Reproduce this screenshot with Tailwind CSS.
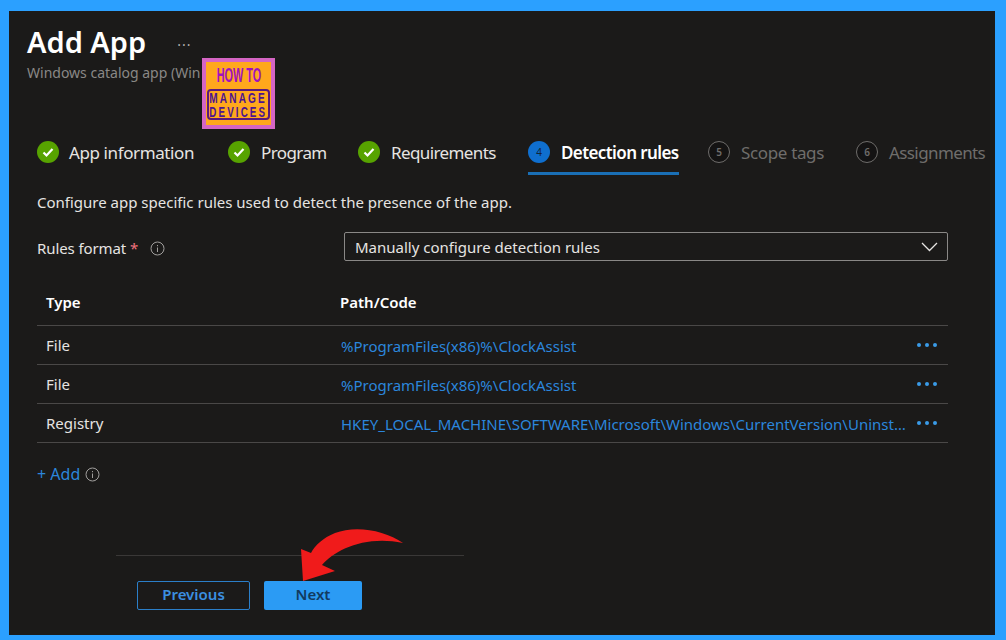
<!DOCTYPE html>
<html lang="en">
<head>
<meta charset="UTF-8" />
<title>Add App</title>
<script src="https://cdn.jsdelivr.net/npm/@tailwindcss/browser@4"></script>
</head>
<body class="bg-[#2ba0ff] font-['Noto_Sans',sans-serif]">
<div class="h-[640px] w-[1006px] pt-[11px] pl-[9px] pr-[11px] pb-[5px] overflow-hidden">
  <main class="relative h-full bg-[#1b1a19] text-[#e6e4e2]">

    <!-- header -->
    <header class="pl-[18px] pt-[11px] h-[127px]">
      <div class="flex items-center h-[38px]">
        <h1 class="text-[29px] font-semibold text-white leading-none">Add App</h1>
        <span class="ml-[31px] text-[14px] text-[#b0aeac] leading-none tracking-[1px]">...</span>
      </div>
      <p class="text-[14px] text-[#8a8886] mt-[3px] leading-[20px]">Windows catalog app (Win</p>
    </header>

    <!-- logo -->
    <div class="absolute left-[193px] top-[47px] w-[73px] h-[71px] border-[4px] border-[#d565c4] bg-[#ffa81c] flex flex-col items-center font-['Liberation_Sans',sans-serif]">
      <span class="mt-[1px] text-[21px] font-bold leading-[24px] scale-x-[0.52] whitespace-nowrap text-[#a010c0]">HOW TO</span>
      <div class="mt-[2px] w-[63px] h-[31px] border-[2px] border-[#5b1a7a] rounded-[4px] flex flex-col items-center justify-center text-[#4d1490] text-[14px] font-bold leading-[14px]">
        <span class="tracking-[3px] scale-x-[0.72] whitespace-nowrap">MANAGE</span>
        <span class="tracking-[3px] scale-x-[0.7] whitespace-nowrap">DEVICES</span>
      </div>
    </div>

    <!-- steps -->
    <nav class="flex pl-[28px] h-[54px] text-[17px]">
      <div class="flex items-start w-[191px] gap-[10px] pt-[3px]">
        <svg class="w-[22px] h-[22px] shrink-0" viewBox="0 0 22 22"><circle cx="11" cy="11" r="11" fill="#57a300"/><path d="M6.500 11.500l3 3 6-6.500" fill="none" stroke="#fff" stroke-width="2.200"/></svg>
        <span class="leading-[24px] tracking-[-0.4px]">App information</span>
      </div>
      <div class="flex items-start w-[130px] gap-[11px] pt-[3px]">
        <svg class="w-[22px] h-[22px] shrink-0" viewBox="0 0 22 22"><circle cx="11" cy="11" r="11" fill="#57a300"/><path d="M6.500 11.500l3 3 6-6.500" fill="none" stroke="#fff" stroke-width="2.200"/></svg>
        <span class="leading-[24px] tracking-[-0.6px]">Program</span>
      </div>
      <div class="flex items-start w-[170px] gap-[11px] pt-[3px]">
        <svg class="w-[22px] h-[22px] shrink-0" viewBox="0 0 22 22"><circle cx="11" cy="11" r="11" fill="#57a300"/><path d="M6.500 11.500l3 3 6-6.500" fill="none" stroke="#fff" stroke-width="2.200"/></svg>
        <span class="leading-[24px] tracking-[-0.6px]">Requirements</span>
      </div>
      <div class="flex items-start w-[151px] h-[37px] gap-[11px] pt-[3px] border-b-[3px] border-[#1a6fb5]">
        <span class="w-[22px] h-[22px] shrink-0 rounded-full bg-[#0f6fcf] text-[#10243a] text-[10px] flex items-center justify-center">4</span>
        <span class="leading-[24px] font-semibold text-white tracking-[-0.6px] whitespace-nowrap">Detection rules</span>
      </div>
      <div class="flex items-start w-[148px] ml-[29px] gap-[11px] pt-[3px] text-[#6f6d6b]">
        <span class="w-[22px] h-[22px] shrink-0 rounded-full border border-[#6f6d6b] bg-[#141313] text-[10px] font-semibold flex items-center justify-center">5</span>
        <span class="leading-[24px] tracking-[-0.35px]">Scope tags</span>
      </div>
      <div class="flex items-start gap-[11px] pt-[3px] text-[#6f6d6b]">
        <span class="w-[22px] h-[22px] shrink-0 rounded-full border border-[#6f6d6b] bg-[#141313] text-[10px] font-semibold flex items-center justify-center">6</span>
        <span class="leading-[24px] tracking-[-0.6px]">Assignments</span>
      </div>
    </nav>

    <section class="pl-[28px] w-[939px] text-[15px]">
      <p class="h-[20px] leading-[20px]">Configure app specific rules used to detect the presence of the app.</p>

      <!-- rules format -->
      <div class="flex items-center h-[29px] mt-[20px]">
        <div class="w-[307px] flex items-center tracking-[-0.1px] pt-[4px]">
          Rules format <span class="text-[#f1707b] ml-[4px]">*</span>
          <svg class="w-[15px] h-[15px] ml-[12px]" viewBox="0 0 15 15" fill="none" stroke="#a19f9d"><circle cx="7.500" cy="7.500" r="6.500"/><path d="M7.500 6.500v4.500M7.500 4v1.200"/></svg>
        </div>
        <div class="flex-1 h-full border border-[#8a8886] rounded-[2px] flex items-center justify-between pl-[10px] pr-[9px]">
          <span class="pt-[2px]">Manually configure detection rules</span>
          <svg class="w-[17px] h-[10px]" viewBox="0 0 17 10" fill="none" stroke="#e6e4e2" stroke-width="1.300"><path d="M1 1l7.500 7.500L16 1"/></svg>
        </div>
      </div>

      <!-- table -->
      <div class="mt-[24px]">
        <div class="grid grid-cols-[294px_1fr_41px] items-center h-[41px] pb-[6px] border-b border-[#4a4847] font-semibold text-white pl-[9px]">
          <span>Type</span><span>Path/Code</span><span></span>
        </div>
        <div class="grid grid-cols-[294px_1fr_41px] items-center h-[39px] border-b border-[#4a4847] pl-[9px]">
          <span>File</span>
          <span class="text-[#2b86dc] mt-[2px] pl-[1px]">%ProgramFiles(x86)%\ClockAssist</span>
          <span class="flex gap-[4px] pl-[10px]"><i class="w-[4px] h-[4px] rounded-full bg-[#3a9be8]"></i><i class="w-[4px] h-[4px] rounded-full bg-[#3a9be8]"></i><i class="w-[4px] h-[4px] rounded-full bg-[#3a9be8]"></i></span>
        </div>
        <div class="grid grid-cols-[294px_1fr_41px] items-center h-[39px] border-b border-[#4a4847] pl-[9px]">
          <span>File</span>
          <span class="text-[#2b86dc] mt-[2px] pl-[1px]">%ProgramFiles(x86)%\ClockAssist</span>
          <span class="flex gap-[4px] pl-[10px]"><i class="w-[4px] h-[4px] rounded-full bg-[#3a9be8]"></i><i class="w-[4px] h-[4px] rounded-full bg-[#3a9be8]"></i><i class="w-[4px] h-[4px] rounded-full bg-[#3a9be8]"></i></span>
        </div>
        <div class="grid grid-cols-[294px_1fr_41px] items-center h-[39px] border-b border-[#4a4847] pl-[9px]">
          <span>Registry</span>
          <span class="text-[#2b86dc] truncate mt-[2px] pl-[1px]">HKEY_LOCAL_MACHINE\SOFTWARE\Microsoft\Windows\CurrentVersion\Uninstall\ClockAssist</span>
          <span class="flex gap-[4px] pl-[10px]"><i class="w-[4px] h-[4px] rounded-full bg-[#3a9be8]"></i><i class="w-[4px] h-[4px] rounded-full bg-[#3a9be8]"></i><i class="w-[4px] h-[4px] rounded-full bg-[#3a9be8]"></i></span>
        </div>
      </div>

      <div class="flex items-center mt-[21px] h-[20px] text-[16px] text-[#2b86dc]">
        <span>+ Add</span>
        <svg class="w-[15px] h-[15px] ml-[5px]" viewBox="0 0 15 15" fill="none" stroke="#a19f9d"><circle cx="7.500" cy="7.500" r="6.500"/><path d="M7.500 6.500v4.500M7.500 4v1.200"/></svg>
      </div>
    </section>

    <!-- footer -->
    <footer class="ml-[107px] w-[348px] mt-[71px] border-t border-[#3a3837] pt-[25px] pl-[21px] flex gap-[14px] text-[15px] font-semibold">
      <button class="w-[113px] h-[29px] pb-[2px] border-[1.500px] border-[#2b7fc9] rounded-[2px] text-[#3b8fe0]">Previous</button>
      <button class="w-[98px] h-[29px] pb-[2px] bg-[#2b9bf4] rounded-[2px] text-[#123a5f]">Next</button>
    </footer>

    <!-- red arrow -->
    <svg class="absolute left-[292px] top-[516px] w-[104px] h-[56px]" viewBox="301 527 104 56"><path d="M403 543C385 530 355 525 335 533C323 538 315 545 311 553L301 549L303 581L335 571L322 565C335 550 365 535 403 543Z" fill="#f01b1b"/></svg>
  </main>
</div>
</body>
</html>
